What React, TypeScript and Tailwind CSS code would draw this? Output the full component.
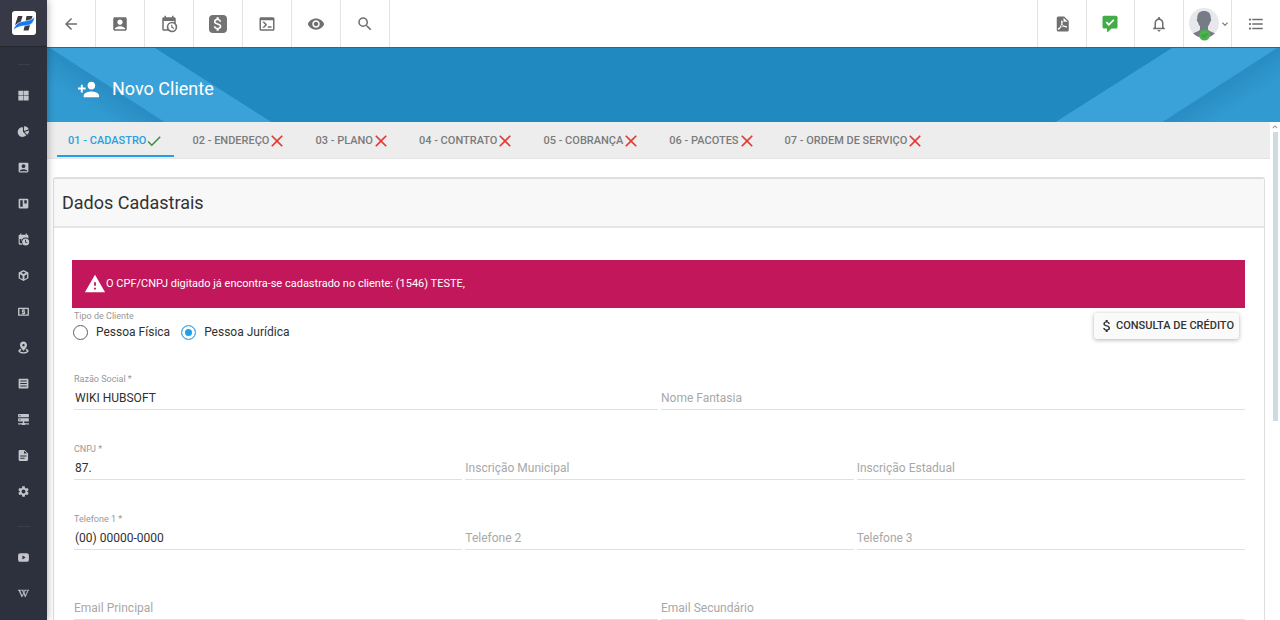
import { useState, type ReactNode } from "react";
import {
  MdAccountBox,
  MdArrowBack,
  MdAttachMoney,
  MdClose,
  MdFormatListBulleted,
  MdKeyboardArrowDown,
  MdNotificationsNone,
  MdPersonAddAlt1,
  MdSearch,
  MdSettings,
  MdVisibility,
  MdWarning,
  MdCheck,
} from "react-icons/md";
import { FaWikipediaW } from "react-icons/fa";

const paths = {
  calendarClock:
    "M15,13H16.5V15.82L18.94,17.23L18.19,18.53L15,16.69V13M19,8H5V19H9.67C9.24,18.09 9,17.07 9,16A7,7 0 0,1 16,9C17.07,9 18.09,9.24 19,9.67V8M5,21C3.89,21 3,20.1 3,19V5C3,3.89 3.89,3 5,3H6V1H8V3H16V1H18V3H19A2,2 0 0,1 21,5V11.1C22.24,12.36 23,14.09 23,16A7,7 0 0,1 16,23C14.09,23 12.36,22.24 11.1,21H5M16,11.15A4.85,4.85 0 0,0 11.15,16C11.15,18.68 13.32,20.85 16,20.85A4.85,4.85 0 0,0 20.85,16C20.85,13.32 18.68,11.15 16,11.15Z",
  console:
    "M20,19V7H4V19H20M20,3A2,2 0 0,1 22,5V19A2,2 0 0,1 20,21H4A2,2 0 0,1 2,19V5C2,3.89 2.9,3 4,3H20M13,17V15H18V17H13M9.58,13L5.57,9H8.4L11.7,12.3C12.09,12.69 12.09,13.33 11.7,13.72L8.42,17H5.59L9.58,13Z",
  pdf: "M14,9H19.5L14,3.5V9M7,2H15L21,8V20A2,2 0 0,1 19,22H7C5.89,22 5,21.1 5,20V4A2,2 0 0,1 7,2M11.93,12.44C12.34,13.34 12.86,14.08 13.46,14.59L13.87,14.91C13,15.07 11.8,15.35 10.53,15.84L10.42,15.88L10.92,14.84C11.37,13.97 11.7,13.18 11.93,12.44M18.41,16.25C18.59,16.07 18.68,15.84 18.69,15.59C18.72,15.39 18.67,15.2 18.57,15.04C18.28,14.57 17.53,14.35 16.29,14.35L15,14.42L14.13,13.84C13.5,13.32 12.93,12.41 12.53,11.28L12.57,11.14C12.9,9.81 13.21,8.2 12.55,7.54C12.39,7.38 12.17,7.3 11.94,7.3H11.7C11.33,7.3 11,7.69 10.91,8.07C10.54,9.4 10.76,10.13 11.13,11.34C10.88,12.23 10.56,13.25 10.05,14.28L9.09,16.08L8.2,16.57C7,17.32 6.43,18.16 6.32,18.69C6.28,18.88 6.3,19.05 6.37,19.23L6.4,19.28L6.88,19.59L7.32,19.7C8.13,19.7 9.05,18.75 10.29,16.63L10.47,16.56C11.5,16.23 12.78,16 14.5,15.81C15.53,16.32 16.74,16.55 17.5,16.55C17.94,16.55 18.24,16.44 18.41,16.25Z",
  commentCheck:
    "M4,1H20A2,2 0 0,1 22,3V16A2,2 0 0,1 20,18H14L9.5,22.3C8.9,22.8 8,22.5 8,21.6V18H4A2,2 0 0,1 2,16V3A2,2 0 0,1 4,1M10.5,14.6L18,7.1L16.4,5.5L10.5,11.4L7.9,8.8L6.3,10.4Z",
  grid: "M2.5,3H11.6V11.6H2.5V3M12.4,3H21.5V11.6H12.4V3M2.5,12.4H11.6V21H2.5V12.4M12.4,12.4H21.5V21H12.4V12.4Z",
  pie: "M11,4V12.5L17.2,18.7A9,9 0 1,1 11,4M13,2.2A9,9 0 0,1 21.7,8L13,11.2V2.2M22.2,10.2A9,9 0 0,1 18.8,17.8L13.8,13Z",
  board: "M5,3H19A2,2 0 0,1 21,5V19A2,2 0 0,1 19,21H5A2,2 0 0,1 3,19V5A2,2 0 0,1 5,3M6,6V18H10.5V6H6M13.5,6V12H18V6H13.5Z",
  calendarSolid:
    "M6,1H8V3H16V1H18V3H19A2,2 0 0,1 21,5V10A8,8 0 0,0 8,16V11H5V19H8.6A8,8 0 0,0 10,21.5H5A2,2 0 0,1 3,19.5V5A2,2 0 0,1 5,3H6V1M16,10A6.5,6.5 0 1,1 16,23A6.5,6.5 0 0,1 16,10M15,12.5V17.2L18.2,19L19,17.7L16.6,16.3V12.5Z",
  cube: "M12,1.8L21,6.5V17.3L12,22.2L3,17.3V6.5L12,1.8M12,4.5L8,6.8L12,9.2L16,6.8L12,4.5M5.5,9.8V16L10.2,18.7V12.5L5.5,9.8M18.5,9.8L13.8,12.5V18.7L18.5,16V9.8Z",
  cash: "M3,5H21A1,1 0 0,1 22,6V19A1,1 0 0,1 21,20H3A1,1 0 0,1 2,19V6A1,1 0 0,1 3,5M4.5,7.5V17.5H19.5V7.5H4.5M9,8.5H11V8H13V8.5H15V10.5H11V11.5H14.5L15,12V16L14.5,16.5H13V17H11V16.5H9V14.5H13V13.5H9.5L9,13V8.5Z",
  marker:
    "M12,1C15.5,1 18.5,4 18.5,7.5C18.5,12 12,18.2 12,18.2C12,18.2 5.5,12 5.5,7.5A6.5,6.5 0 0,1 12,1M12,5.5A2.2,2.2 0 0,0 12,9.9A2.2,2.2 0 0,0 12,5.5M21.5,18.5C21.5,21.3 17,23.3 12,23.3C7,23.3 2.5,21.3 2.5,18.5C2.5,16.6 4.6,15 7,14.3L8.4,16.6C6.8,17 5.8,17.9 5.8,18.5C5.8,19.6 8.4,20.6 12,20.6C15.6,20.6 18.2,19.6 18.2,18.5C18.2,17.9 17.2,17 15.6,16.6L17,14.3C19.4,15 21.5,16.6 21.5,18.5Z",
  list: "M4,3H20A1,1 0 0,1 21,4V20A1,1 0 0,1 20,21H4A1,1 0 0,1 3,20V4A1,1 0 0,1 4,3M6,6.5V8.5H18V6.5H6M6,11V13H18V11H6M6,15.5V17.5H18V15.5H6Z",
  server:
    "M3,2H21A1,1 0 0,1 22,3V7A1,1 0 0,1 21,8H3A1,1 0 0,1 2,7V3A1,1 0 0,1 3,2M3,9.5H21A1,1 0 0,1 22,10.5V14.5A1,1 0 0,1 21,15.5H13V18H14A1,1 0 0,1 15,19H22V21H15A1,1 0 0,1 14,22H10A1,1 0 0,1 9,21H2V19H9A1,1 0 0,1 10,18H11V15.5H3A1,1 0 0,1 2,14.5V10.5A1,1 0 0,1 3,9.5M4.5,4V6H6.5V4H4.5M4.5,11.5V13.5H6.5V11.5H4.5Z",
  file: "M13,8.5H18.5L13,3V8.5M5,2H14L20.5,8.5V20A2,2 0 0,1 18.5,22H5A2,2 0 0,1 3,20V4A2,2 0 0,1 5,2M14,18V16H6V18H14M17.5,14V12H6V14H17.5Z",
  youtube: "M6,4H18A4,4 0 0,1 22,8V16A4,4 0 0,1 18,20H6A4,4 0 0,1 2,16V8A4,4 0 0,1 6,4M10,8.5V15.5L16,12L10,8.5Z",
};

function Icon({ d, className }: { d: string; className: string }) {
  return (
    <svg viewBox="0 0 24 24" className={className} fill="currentColor" fillRule="evenodd" aria-hidden="true">
      <path d={d} />
    </svg>
  );
}

const menu: { label: string; icon: ReactNode }[] = [
  { label: "Dashboard", icon: <Icon d={paths.grid} className="size-[13px]" /> },
  { label: "Relatórios", icon: <Icon d={paths.pie} className="size-[13px]" /> },
  { label: "Clientes", icon: <MdAccountBox className="size-[13px]" /> },
  { label: "Quadros", icon: <Icon d={paths.board} className="size-[13px]" /> },
  { label: "Agenda", icon: <Icon d={paths.calendarSolid} className="size-[13px]" /> },
  { label: "Estoque", icon: <Icon d={paths.cube} className="size-[13px]" /> },
  { label: "Financeiro", icon: <Icon d={paths.cash} className="size-[13px]" /> },
  { label: "Mapa", icon: <Icon d={paths.marker} className="size-[13px]" /> },
  { label: "Cadastros", icon: <Icon d={paths.list} className="size-[13px]" /> },
  { label: "Rede", icon: <Icon d={paths.server} className="size-[13px]" /> },
  { label: "Fiscal", icon: <Icon d={paths.file} className="size-[13px]" /> },
  { label: "Configurações", icon: <MdSettings className="size-[13px]" /> },
];

const helpMenu: { label: string; icon: ReactNode }[] = [
  { label: "YouTube", icon: <Icon d={paths.youtube} className="size-[13px]" /> },
  { label: "Wiki", icon: <FaWikipediaW className="size-[11px] stroke-current stroke-[24px]" /> },
];

const shortcuts: { label: string; icon: ReactNode }[] = [
  { label: "Voltar", icon: <MdArrowBack className="size-[18px]" /> },
  { label: "Cliente", icon: <MdAccountBox className="size-[18px]" /> },
  { label: "Agenda", icon: <Icon d={paths.calendarClock} className="size-[18px]" /> },
  {
    label: "Financeiro",
    icon: (
      <span className="flex size-[18px] items-center justify-center rounded-[4px] bg-[#737373] text-white">
        <MdAttachMoney className="size-[18px]" />
      </span>
    ),
  },
  { label: "Console", icon: <Icon d={paths.console} className="size-[18px]" /> },
  { label: "Visualizar", icon: <MdVisibility className="size-[18px]" /> },
  { label: "Buscar", icon: <MdSearch className="size-[18px]" /> },
];

const tabs = [
  "01 - Cadastro",
  "02 - Endereço",
  "03 - Plano",
  "04 - Contrato",
  "05 - Cobrança",
  "06 - Pacotes",
  "07 - Ordem de Serviço",
];

function Logo() {
  return (
    <svg viewBox="0 0 24 24" className="size-6" aria-hidden="true">
      <rect width="24" height="24" rx="3" fill="#fff" />
      <path d="M6 5h4.500L8.500 12L3 14zM14.500 5h6L16.500 19.500H11.500L13 13.500z" fill="#3b3b3f" />
      <path
        d="M1.500 19C3 12.500 8 10.500 13 10C17 9.600 20 8.500 22.500 6C22 11.500 19.500 14 14.500 14.500C9 15 5 16 1.500 19z"
        fill="#1479f5"
        stroke="#fff"
        strokeWidth="0.600"
      />
    </svg>
  );
}

function Avatar() {
  return (
    <svg viewBox="0 0 30 34" className="h-[34px] w-[30px] shrink-0" aria-hidden="true">
      <defs>
        <clipPath id="avatar-clip">
          <circle cx="15" cy="16" r="15" />
        </clipPath>
      </defs>
      <circle cx="15" cy="16" r="15" fill="#e6e8ec" />
      <path
        clipPath="url(#avatar-clip)"
        d="M15 4c4.800 0 7 3 6.700 7.500.8.300.6 3-.6 3.500-.4 2-1.200 3.300-2.100 4.200v3.300c1 2 4 2.300 7.500 4V32h-23v-5.500c3.500-1.700 6.500-2 7.500-4v-3.300c-.9-.9-1.700-2.200-2.100-4.200-1.200-.5-1.400-3.200-.6-3.500C8 7 10.200 4 15 4z"
        fill="#757c86"
      />
      <circle cx="15.500" cy="28" r="5.500" fill="#4caf50" />
      <path d="M13 28l2 2 3.200-3.500" fill="none" stroke="#3d9841" strokeWidth="1.200" />
    </svg>
  );
}

function SideButton({ label, icon }: { label: string; icon: ReactNode }) {
  return (
    <button type="button" aria-label={label} className="flex h-9 w-full items-center justify-center text-[#c3c5ca]">
      {icon}
    </button>
  );
}

function Sidebar() {
  return (
    <aside className="z-20 flex w-[47px] shrink-0 flex-col bg-[#2d303d] shadow-[0_0_8px_rgba(0,0,0,0.35)]">
      <div className="flex h-[47px] shrink-0 items-center justify-center border-b border-[#24262f] bg-[#373a46]">
        <Logo />
      </div>
      <nav className="flex flex-col items-center">
        <div className="flex h-[30px] w-full items-end justify-center pb-3">
          <div className="h-px w-3 bg-[#3d404c]" />
        </div>
        {menu.map((m) => (
          <SideButton key={m.label} {...m} />
        ))}
        <div className="flex h-[30px] w-full items-end justify-center pb-3">
          <div className="h-px w-3 bg-[#3d404c]" />
        </div>
        {helpMenu.map((m) => (
          <SideButton key={m.label} {...m} />
        ))}
      </nav>
    </aside>
  );
}

function TopBar() {
  return (
    <header className="flex h-[47px] shrink-0 justify-between bg-white text-[#6f6f6f]">
      <div className="grid w-[343px] grid-cols-7">
        {shortcuts.map((s) => (
          <button key={s.label} type="button" aria-label={s.label} className="flex items-center justify-center border-r border-[#e3e3e3]">
            {s.icon}
          </button>
        ))}
      </div>
      <div className="grid w-[243px] grid-cols-5">
        <button type="button" aria-label="PDF" className="flex items-center justify-center border-l border-[#e3e3e3]">
          <Icon d={paths.pdf} className="size-[18px]" />
        </button>
        <button type="button" aria-label="Mensagens" className="flex items-center justify-center border-l border-[#e3e3e3] text-[#43ab47]">
          <Icon d={paths.commentCheck} className="size-[18px]" />
        </button>
        <button type="button" aria-label="Notificações" className="flex items-center justify-center border-l border-[#e3e3e3]">
          <MdNotificationsNone className="size-[18px]" />
        </button>
        <button type="button" aria-label="Usuário" className="flex items-center justify-end border-l border-[#e3e3e3]">
          <Avatar />
          <MdKeyboardArrowDown className="size-3" />
        </button>
        <button type="button" aria-label="Menu" className="flex items-center justify-center border-l border-[#e3e3e3]">
          <MdFormatListBulleted className="size-[18px]" />
        </button>
      </div>
    </header>
  );
}

function BannerArt({ id, className }: { id: string; className: string }) {
  return (
    <svg viewBox="0 0 226 75" className={className} aria-hidden="true">
      <defs>
        <linearGradient id={id} gradientUnits="userSpaceOnUse" x1="62" y1="38" x2="46" y2="63">
          <stop offset="0" stopColor="#298cc2" />
          <stop offset="1" stopColor="#319bd1" />
        </linearGradient>
      </defs>
      <path d="M0 0H108L226 75H0z" fill="#3aa2d8" />
      <path d="M0 0H3L119 75H0z" fill={`url(#${id})`} />
    </svg>
  );
}

function PageHeader() {
  return (
    <div className="relative flex h-[75px] shrink-0 items-center overflow-hidden border-t border-[#1c6f9d] bg-[#2089bf] pl-[30px] pt-2 text-white">
      <BannerArt id="shade-left" className="absolute left-0 top-0 h-[75px] w-[226px]" />
      <BannerArt id="shade-right" className="absolute right-0 top-0 h-[75px] w-[226px] -scale-x-100" />
      <MdPersonAddAlt1 className="relative size-[23px] -scale-x-100" />
      <h1 className="relative ml-3 text-lg">Novo Cliente</h1>
    </div>
  );
}

type FieldProps = { id: string; label: string; value?: string };

function Field({ id, label, value }: FieldProps) {
  if (value) {
    return (
      <div className="flex h-10 flex-col justify-end border-b border-[#e0e0e0]">
        <label htmlFor={id} className="text-[9px] leading-4 text-[#979797]">
          {label} *
        </label>
        <input id={id} defaultValue={value} className="h-[22px] w-full px-px text-xs text-[#303030] outline-none" />
      </div>
    );
  }
  return (
    <div className="flex h-10 flex-col justify-end border-b border-[#e0e0e0]">
      <input id={id} aria-label={label} placeholder={label} className="h-[22px] w-full text-xs outline-none placeholder:text-[#a8a8a8]" />
    </div>
  );
}

function ClientForm() {
  const [kind, setKind] = useState("Pessoa Jurídica");

  return (
    <form className="pb-6 pl-[18px] pr-[19px] pt-8">
      <div role="alert" className="flex h-12 items-center bg-[#c2185b] pl-3 text-[11px] leading-4 text-white">
        <MdWarning className="size-[22px]" />
        O CPF/CNPJ digitado já encontra-se cadastrado no cliente: (1546) TESTE,
      </div>

      <div className="flex h-[62px] items-start justify-between pl-px pr-[6px]">
        <fieldset>
          <legend className="pl-px text-[9px] leading-4 text-[#979797]">Tipo de Cliente</legend>
          <div className="flex gap-[11px]">
            {["Pessoa Física", "Pessoa Jurídica"].map((k) => (
              <label key={k} className="flex items-center gap-2 text-xs text-[#303030]">
                <input
                  type="radio"
                  name="kind"
                  checked={kind === k}
                  onChange={() => setKind(k)}
                  className="size-[15px] appearance-none rounded-full border border-[#606060] checked:border-[#35aeee] checked:bg-[#1e9fe8] checked:shadow-[inset_0_0_0_3px_white]"
                />
                {k}
              </label>
            ))}
          </div>
        </fieldset>
        <button type="button" className="mt-[5px] flex h-[26px] items-center gap-px rounded-[3px] bg-[#fafafa] px-[5px] text-[11px] font-medium uppercase leading-4 text-[#333] shadow-[0_1px_4px_rgba(0,0,0,0.3)]">
          <MdAttachMoney className="size-4" />
          Consulta de Crédito
        </button>
      </div>

      <div className="flex flex-col gap-[30px] pl-[2px]">
        <div className="grid grid-cols-2 gap-[3px]">
          <Field id="razao" label="Razão Social" value="WIKI HUBSOFT" />
          <Field id="fantasia" label="Nome Fantasia" />
        </div>
        <div className="grid grid-cols-3 gap-[3px]">
          <Field id="cnpj" label="CNPJ" value="87." />
          <Field id="municipal" label="Inscrição Municipal" />
          <Field id="estadual" label="Inscrição Estadual" />
        </div>
        <div className="grid grid-cols-3 gap-[3px]">
          <Field id="tel1" label="Telefone 1" value="(00) 00000-0000" />
          <Field id="tel2" label="Telefone 2" />
          <Field id="tel3" label="Telefone 3" />
        </div>
        <div className="grid grid-cols-2 gap-[3px]">
          <Field id="email1" label="Email Principal" />
          <Field id="email2" label="Email Secundário" />
        </div>
      </div>
    </form>
  );
}

export default function App() {
  const [active, setActive] = useState(0);

  return (
    <div className="flex h-screen overflow-hidden bg-white font-[Roboto,sans-serif]">
      <Sidebar />
      <div className="flex min-w-0 flex-1 flex-col">
        <TopBar />
        <PageHeader />
        <div className="flex min-h-0 flex-1">
          <main className="min-w-0 flex-1 overflow-hidden">
            <div role="tablist" className="flex h-[37px] gap-[7px] border-b border-[#e4e4e4] bg-[#ededed] pl-[10px]">
              {tabs.map((t, i) => (
                <button
                  key={t}
                  type="button"
                  role="tab"
                  aria-selected={i === active}
                  onClick={() => setActive(i)}
                  className={
                    i === active
                      ? "flex h-[35px] items-center border-b-2 border-[#1e9fe8] pl-[11px] pr-[10px] pt-1 text-[11px] font-medium uppercase leading-4 text-[#2a9fe0]"
                      : "flex h-[35px] items-center border-b-2 border-transparent pl-[11px] pr-[10px] pt-1 text-[11px] font-medium uppercase leading-4 text-[#7b7b7b]"
                  }
                >
                  {t}
                  {i === 0 ? (
                    <MdCheck className="-ml-px mr-px size-[18px] text-[#388e3c]" />
                  ) : (
                    <MdClose className="-ml-[2px] size-5 text-[#e53935]" />
                  )}
                </button>
              ))}
            </div>

            <section className="ml-[6px] mr-[5px] mt-[18px] rounded-t-[3px] border border-t-2 border-[#dedede]">
              <h2 className="flex h-[49px] items-center border-b-2 border-[#e6e6e6] bg-[#f8f8f8] pl-2 text-lg text-[#333]">
                Dados Cadastrais
              </h2>
              <ClientForm />
            </section>
          </main>
          <div className="flex w-[10px] shrink-0 flex-col items-center" aria-hidden="true">
            <MdKeyboardArrowDown className="size-[10px] rotate-180 text-[#8a8a8a]" />
            <div className="h-[58%] w-[5px] bg-[#cfdbe3]" />
          </div>
        </div>
      </div>
    </div>
  );
}
